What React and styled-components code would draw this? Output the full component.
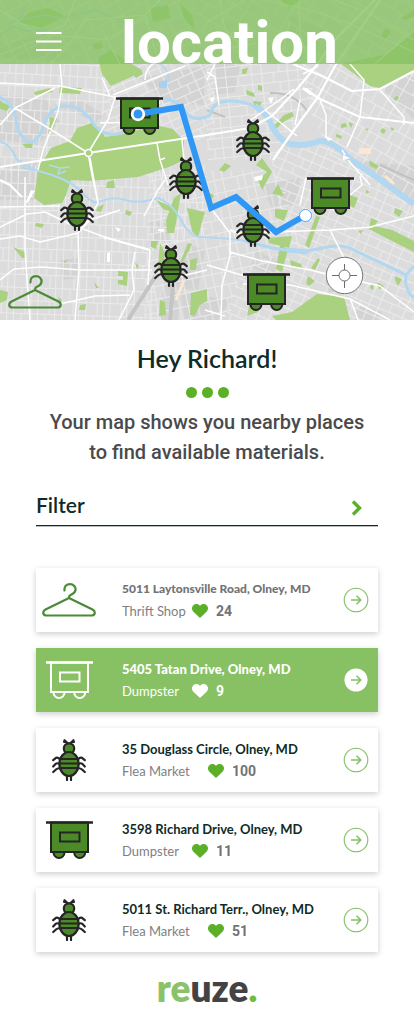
import React from "react";
import styled, { createGlobalStyle, css } from "styled-components";

const GlobalStyle = createGlobalStyle`
  *, *::before, *::after { box-sizing: border-box; }
  body { margin: 0; background: #fff; }
  button { font: inherit; color: inherit; background: none; border: 0; padding: 0; cursor: pointer; }
  h1, h2, h3, p, ul { margin: 0; padding: 0; }
  ul { list-style: none; }
`;

const brandFont = css`font-family: Lato, "Liberation Sans", sans-serif;`;
const bodyFont = css`font-family: Roboto, "Liberation Sans", sans-serif;`;

const Page = styled.div`
  ${brandFont}
  color: #0f2b27;
  background: #fff;
`;

const Hero = styled.section`
  display: grid;
  grid-template-rows: 64px auto;
`;

const Header = styled.header`
  grid-area: 1 / 1;
  z-index: 1;
  display: grid;
  grid-template-columns: 36px 26px 1fr;
  align-items: start;
  background: rgba(135, 193, 98, 0.78);
`;

const MenuButton = styled.button`
  grid-column: 2;
  display: block;
  margin-top: 31px;
  svg { display: block; }
`;

const Title = styled.h1`
  ${bodyFont}
  margin-top: 8px;
  padding-left: 59px;
  font-size: 60px;
  font-weight: 700;
  line-height: 70px;
  color: #fff;
`;

const MapArt = styled.svg`
  grid-area: 1 / 1 / 3 / 2;
  display: block;
  width: 100%;
  height: 320px;
`;

const Content = styled.main`
  padding: 0 36px;
`;

const Greeting = styled.h2`
  padding-top: 22px;
  font-size: 25px;
  line-height: 32px;
  font-weight: 600;
  text-align: center;
`;

const Dots = styled.div`
  display: flex;
  justify-content: center;
  gap: 5px;
  margin-top: 13px;
`;

const Dot = styled.span`
  width: 11px;
  height: 11px;
  border-radius: 50%;
  background: #5cb028;
`;

const Intro = styled.p`
  ${bodyFont}
  max-width: 330px;
  margin: 9px auto 0;
  font-size: 20px;
  line-height: 30px;
  font-weight: 500;
  color: #4a4a4c;
  text-align: center;
`;

const FilterButton = styled.button`
  display: flex;
  align-items: center;
  justify-content: space-between;
  width: 100%;
  height: 42px;
  margin-top: 17px;
  padding-right: 14px;
  border-bottom: 1px solid #0f2b27;
  box-shadow: 0 1px 0 #b9c2c1;
  && { font-size: 21px; font-weight: 600; color: #0f2b27; }
  svg { display: block; margin-top: 6px; }
`;

const PlaceList = styled.ul`
  display: grid;
  gap: 16px;
  padding-top: 42px;
`;

const themes = {
  muted: { bg: "#fff", title: "#737375", sub: "#808083", accent: "#5cb028", size: 12, weight: 900 },
  normal: { bg: "#fff", title: "#0f2b27", sub: "#808083", accent: "#5cb028", size: 13, weight: 700 },
  active: { bg: "#88c163", title: "#fff", sub: "#fff", accent: "#fff", size: 13, weight: 900 },
};

const Card = styled.li`
  display: grid;
  grid-template-columns: 66px minmax(0, 1fr) 26px;
  column-gap: 20px;
  align-items: center;
  height: 64px;
  padding-right: 9px;
  background: ${(p) => themes[p.$tone].bg};
  box-shadow: 0 2px 6px rgba(0, 0, 0, 0.2);
`;

const IconCell = styled.div`
  display: flex;
  justify-content: center;
  svg { display: block; }
`;

const Address = styled.h3`
  font-size: ${(p) => themes[p.$tone].size}px;
  line-height: 20px;
  font-weight: ${(p) => themes[p.$tone].weight};
  white-space: nowrap;
  color: ${(p) => themes[p.$tone].title};
`;

const Meta = styled.div`
  display: flex;
  align-items: center;
  margin-top: 2px;
  line-height: 20px;
  color: ${(p) => themes[p.$tone].sub};
  svg { display: block; color: ${(p) => themes[p.$tone].accent}; }
`;

const Kind = styled.span`
  width: ${(p) => (p.$wide ? 86 : 70)}px;
  font-size: 13px;
`;

const Likes = styled.span`
  ${bodyFont}
  padding-left: 8px;
  font-size: 14px;
  font-weight: 700;
  color: ${(p) => (p.$tone === "active" ? "#fff" : "#737375")};
`;

const GoButton = styled.button`
  display: block;
  svg { display: block; }
`;

const Footer = styled.footer`
  padding: 16px 0 8px;
  text-align: center;
  font-size: 37px;
  line-height: 40px;
  font-weight: 800;
  color: #434345;
`;

const Leaf = styled.span`
  color: ${(p) => (p.$bright ? "#6dbd45" : "#8ac269")};
`;

function Bug() {
  return (
    <g fill="none" stroke="#252525" strokeWidth="2.2" strokeLinecap="round" strokeLinejoin="round">
      <path d="M12.5 1.2 16.5 5M21.5 1.2 17.5 5M12 2.8h1.5M22 2.8h-1.500" />
      <path d="M8 20.500Q6 18 4 18.800L1.200 21.200M7.500 25Q5 23.500 3.500 25L1.200 27.500M8.500 29.500Q6 28.700 4 30.500L1.200 33" />
      <path d="M26 20.500Q28 18 30 18.800L32.800 21.200M26.500 25Q29 23.500 30.500 25L32.800 27.500M25.500 29.500Q28 28.700 30 30.500L32.800 33" />
      <path d="M15 36v5M19 36v5" />
      <circle cx="17" cy="9.500" r="5.200" fill="#4b8a27" />
      <ellipse cx="17" cy="25" rx="9.600" ry="12" fill="#4b8a27" />
      <path d="M8.500 20h17M7.500 24.500h19M8.500 29h17" strokeWidth="1.800" />
    </g>
  );
}

function Dumpster({ outline }) {
  const fill = outline ? "none" : "#4b8a27";
  const stroke = outline ? "#fff" : "#252525";
  return (
    <g fill={fill} stroke={stroke} strokeWidth="2">
      <path d="M7.500 31.500a5.500 5.500 0 0 0 11 0M28.200 31.500a5.500 5.500 0 0 0 11 0" />
      <path d="M5 1.500h37v29.500H5z" />
      <path d="M0 1.500h47" strokeWidth="2.600" />
      <path d="M14 11.500h19.500v9H14z" />
    </g>
  );
}

function Hanger() {
  return (
    <path
      d="M22.500 7.500C22 3.500 24.500 1.200 28 1.200C31.500 1.200 34 4 33.500 7C33 10 31 11 29 11.700C27.300 12.300 27 13 27 15L3.500 26.500C0 28.500 .800 32.500 4.500 32.500H49.500C53.200 32.500 54 28.500 50.500 26.500L27 15"
      fill="none"
      stroke="#4b8a35"
      strokeWidth="2.2"
      strokeLinecap="round"
      strokeLinejoin="round"
    />
  );
}

function PlaceIcon({ kind, outline }) {
  if (kind === "Thrift Shop")
    return <svg width="54" height="34" viewBox="0 0 54 34" aria-hidden="true"><Hanger /></svg>;
  if (kind === "Dumpster")
    return <svg width="47" height="38" viewBox="0 0 47 38" aria-hidden="true"><Dumpster outline={outline} /></svg>;
  return <svg width="34" height="42" viewBox="0 0 34 42" aria-hidden="true"><Bug /></svg>;
}

function Heart() {
  return (
    <svg width="16" height="14" viewBox="0 0 16 14" aria-hidden="true">
      <path fill="currentColor" d="M8 14 1.400 7.700C-.5 5.800-.4 2.700 1.300 1.200 3.300-.6 6.500-.3 8 2 9.500-.3 12.700-.6 14.700 1.200c1.700 1.500 1.800 4.600-.1 6.500z" />
    </svg>
  );
}

function GoIcon({ filled }) {
  return (
    <svg width="26" height="26" viewBox="0 0 26 26" aria-hidden="true" fill="none" stroke="#82c060">
      <circle cx="13" cy="13" r={filled ? 11 : 11.8} fill="#fff" stroke={filled ? "#fff" : "#82c060"} strokeWidth="1.100" />
      <path d="M8 13h9.500M13.500 8.700 17.800 13l-4.300 4.300" strokeWidth="1.500" />
    </svg>
  );
}

const STREET_ZONES = [
  { id: "s1", angle: 3, w: 9, h: 12, area: "M0 60H115L110 98 88 153 0 175z" },
  { id: "s2", angle: -24, w: 13, h: 9, area: "M100 60H215V140H105z" },
  { id: "s3", angle: -6, w: 12, h: 10, area: "M207 60H300L318 100 270 160H207z" },
  { id: "s4", angle: 29, w: 11, h: 13, area: "M300 60H414V215L330 155 310 110z" },
  { id: "s5", angle: 2, w: 8, h: 13, area: "M0 165 207 165 207 235 150 252 160 320H0z" },
  { id: "s6", angle: -12, w: 10, h: 13, area: "M150 170H280L300 250 240 275 230 320H145z" },
  { id: "s7", angle: 23, w: 12, h: 9, area: "M270 150 330 145 414 205V320H225L240 270 285 250z" },
  { id: "s8", angle: -28, w: 17, h: 14, area: "M0 0H195V64H0z" },
  { id: "s9", angle: 31, w: 18, h: 13, area: "M195 0H414V64H195z" },
];

const BLOCKS =
  "M0 95 45 98 60 122 38 145 0 140zM140 78 205 66 204 105 165 103zM0 165 40 162 34 200 0 200zM52 105 80 100 105 115 95 123 75 112zM375 68 395 64 414 78V120L400 105 384 90zM345 160 414 166V200zM215 62 240 66 235 92 215 95zM260 185 300 178 296 205 272 208zM150 220 168 224 170 243 152 239zM187 244 205 250 198 290 172 288zM165 270 182 270 178 320 160 320zM256 250 280 262 275 275 250 268zM60 260 78 258 77 278 62 280zM180 292 230 300 218 320 185 320zM325 280 350 283 352 292 328 292zM360 305 382 312 378 320H352zM0 45 60 30 62 60 0 58zM290 15 325 30 318 50 285 40z";

const PARKS =
  "M45 158 51 148 70 141 77 128 92 123 99 127 105 137 124 134 155 125 173 129 184 141 184 160 169 167 138 177 89 181 71 180 66 195 62 203 44 205 34 198 37 178 39 165zM98 58 110 50 128 62 142 70 131 77 111 86 102 74zM60 87 82 88 80 94 59 93zM34 92 50 88 53 92 35 95zM130 71 141 69 143 74 136 78zM50 117 57 119 54 126 48 135 50 124zM0 101 10 106 7 111 0 109zM22 144 33 143 32 148 26 148zM280 0H300L290 8zM30 12 48 8 65 16 42 28 18 22zM150 8 168 5 170 18 153 22zM180 3 192 15 195 30 184 18zM92 45 101 41 103 48 95 50zM341 64 387 54 414 32V72L398 79 380 88 370 86 356 75zM381 36 386 28 391 31 386 39zM401 18 414 10V16L406 20zM272 128 284 115 292 112 294 116 282 123 277 128zM246 90 254 93 255 97 247 95zM258 85 262 86 262 91 258 90zM242 69 248 68 246 74 242 74zM253 101 262 102 260 106 254 105zM341 124 346 123 347 127 341 128zM348 122 353 124 351 128zM336 134 342 136 341 139 336 137zM382 128 386 130 384 134 380 132zM390 127 395 129 392 131zM396 96 399 97 397 101 393 99zM365 128 369 129 367 131zM107 182 114 180 115 188 106 188zM98 207 104 204 101 212 96 211zM126 210 132 212 130 216 125 214zM36 223 44 224 42 228 35 226zM13 247 25 252 26 258 22 258zM156 200 170 206 172 212 163 209zM174 198 181 193 178 212 174 233 167 233 166 220zM187 208 205 212 202 222 198 238 192 231zM160 243 165 253 162 276 158 268zM151 241 158 241 156 249 151 247zM188 243 192 244 184 260 180 263zM190 260 197 258 196 270 190 270zM118 271 128 272 127 286 118 284V280H123V276H118zM63 261 68 260 65 263zM80 305 86 304 85 310 79 310zM94 282 99 288 96 288zM58 297 62 300 60 304zM191 293 207 289V301L200 305 195 316 190 315zM160 300 165 302 166 315 159 316zM225 163 231 166 224 172 219 170zM262 158 272 172 262 190 258 180 267 172 256 165zM278 184 284 196 272 194zM275 209 288 210 284 221 275 217zM268 238 292 236 289 248 269 243zM280 245 288 249 282 272 276 269zM316 216 320 217 309 248 305 245zM318 258 320 260 315 270 311 268zM290 260 301 264 303 269 291 266zM308 276 315 281 309 286 306 283zM350 195 358 198 354 208 349 205zM371 218 378 221 374 226 392 230 414 241V252L390 240 369 229zM395 208 403 211 399 217 394 213zM371 284 374 285 373 290 370 288zM377 282 384 286 379 290zM395 276 402 279 398 286 395 280zM317 294 344 297 350 320H276L272 316 292 312zM0 290 8 292 7 300 0 303zM250 301 262 300 258 312 247 316zM363 230 361 234 358 231zM366 190 370 192 366 194zM369 160 379 166 376 169 370 166zM135 262 139 266 137 269zM207 192 214 195 211 201 207 199z";

const RIVERS = [
  ["M0 97Q14 104 16 120T28 142Q38 144 45 122Q52 105 68 106T95 126Q108 139 124 132", 3],
  ["M163 98Q178 100 188 115Q197 122 210 115Q212 102 228 101T258 108", 3],
  ["M255 106Q266 112 271 124Q278 140 290 144Q305 147 319 141Q332 140 350 159L372 174 414 204", 6],
  ["M0 141Q10 145 14 154T22 161M22 163Q30 169 42 172Q66 178 80 190Q90 202 97 203Q110 196 125 200T158 198Q172 203 181 220T200 237Q228 238 245 241", 2],
  ["M245 241 272 248 300 252 318 249Q340 243 352 249L406 275 414 266M406 275Q404 290 414 298", 3],
  ["M287 250 308 252", 5],
  ["M160 64Q171 72 168 82M22 167 30 170 36 170M49 165 60 168 58 174 66 171M60 168 70 167M150 0 165 10", 1.5],
  ["M0 35 12 26 25 31 48 30M5 25 18 20 25 8M20 20 45 15 60 18 95 10 130 25", 2],
];

const ROADS =
  "M0 83 60 86 115 97 160 103M0 125 15 108 55 88M60 64 62 86 58 112 43 150 38 170M115 97 108 120 88 153 92 175 98 203M113 95 150 80 185 66M15 108 55 132 88 153M102 78 110 96M145 80Q145 66 160 60M100 123 145 122M157 143 160 160 168 185M160 160 165 158M182 140 184 160M207 80 215 64M207 72 215 77 219 105M0 227 27 214 45 212 70 224 107 238 150 250M0 239 20 236 40 242 78 233 90 220 120 210M0 280 14 269 42 267 80 270 152 270M0 207 60 206M25 177 25 250 30 320M90 158 98 203 88 220 78 233 79 270 75 320M144 216 158 190 165 180M135 252 132 270 134 290 119 320M150 250 148 285M60 304 95 296 130 295M300 100 295 125M248 122 281 99 294 89M265 110 297 136M303 74 318 66M318 95 326 115 326 138M347 147 360 117 364 80 350 64M380 90 404 117M345 155 342 150M404 117V125M207 265 245 276M213 211 230 233 230 256 222 285 221 320M230 252 262 261 310 270 380 286 414 312M330 230 346 262M300 205 306 178M310 190 340 215M370 227 414 216M240 233 330 230 373 227M165 280 207 270M243 284 290 285 350 299 390 320M350 298 358 320M205 310 225 316M360 176 362 185 350 195M348 160 370 185";

const AVENUES =
  "M0 167 88 153 207 135 250 128 272 116 298 88 316 66 335 40 375 0M273 160 294 130 318 97 335 66 380 0M293 64 322 76 352 91 380 89 414 71M303 88 320 99 360 117 414 123M107 238 150 250M230 230 240 234M0 180 10 185 22 197";

const HEADER_ROADS =
  "M0 10 40 35 65 25 75 0M0 55 50 35 110 40 145 15 160 0M50 64 65 50 85 20 145 15M105 35 120 64M145 15 158 60M220 0 225 30 260 64M207 22 245 0M299 0 300 35 310 64M264 0 310 10 345 22 414 52M335 0 372 15 414 40M375 64 414 30M207 52 300 35M280 64 290 20";

function CityMap() {
  return (
    <MapArt viewBox="0 0 414 320" preserveAspectRatio="xMidYMid slice" role="img" aria-label="Map of nearby places">
      <defs>
        {STREET_ZONES.map((z) => (
          <pattern key={z.id} id={z.id} width={z.w * 3} height={z.h * 2} patternUnits="userSpaceOnUse" patternTransform={`rotate(${z.angle})`}>
            <path
              d={`M0 .500H${z.w * 3}M0 ${z.h + 0.5}H${z.w * 3}M.500 0V${z.h * 2}M${z.w} 0V${z.h}M${z.w * 1.5} ${z.h}V${z.h * 2}M${z.w * 2.2} 0V${z.h * 2}`}
              fill="none"
              stroke="#ebebeb"
              strokeWidth="1"
            />
          </pattern>
        ))}
      </defs>
      <rect width="414" height="320" fill="#dcdcdc" />
      <path d={BLOCKS} fill="#d3d3d3" />
      {STREET_ZONES.map((z) => <path key={z.id} d={z.area} fill={`url(#${z.id})`} />)}
      <path d={PARKS} fill="#a9d180" />
      <path d="M159 82 167 80V88H159z" fill="#a9cfec" />
      <path d="M184 280 176 300M385 176 394 184" stroke="#fbe8d2" strokeWidth="3" />
      <path d="M359 148h12v6h-12z" fill="#fbe8d2" />
      <path d="M155 277 128 320M173 285 170 320" stroke="#c4c4c4" strokeWidth="4" />
      <path d="M207 110 225 117M270 93Q295 92 308 112M380 165 414 180" fill="none" stroke="#c2c2c2" strokeWidth="2" />
      {RIVERS.map(([d, width]) => <path key={d} d={d} fill="none" stroke="#b1d7f1" strokeWidth={width} strokeLinejoin="round" />)}
      <path d={HEADER_ROADS} fill="none" stroke="#fff" strokeWidth="1.200" opacity=".7" />
      <path d={ROADS} fill="none" stroke="#fff" strokeWidth="1.500" strokeLinejoin="round" />
      <path d={AVENUES} fill="none" stroke="#fff" strokeWidth="2.200" strokeLinejoin="round" />
      <path d="M31 190 35 191 28 202 25 204zM268 98 274 97 271 104zM325 136 333 139 328 141zM343 155 350 158 343 160zM103 236 109 237 105 240zM115 227 121 229 118 232zM158 229 165 229 163 232 158 231zM107 253 110 252V262H107zM254 177 263 175 262 180 255 181zM210 98 214 97 214 101 211 102zM302 89 307 88 314 94 310 95z" fill="#fff" />
      <circle cx="88.500" cy="153" r="3.500" fill="#a9d180" stroke="#fff" strokeWidth="1.500" />

      <g transform="translate(116 97)"><Dumpster /></g>
      <g transform="translate(307 177)"><Dumpster /></g>
      <g transform="translate(243 273)"><Dumpster /></g>
      <g transform="translate(236 119)"><Bug /></g>
      <g transform="translate(169 157)"><Bug /></g>
      <g transform="translate(60 189)"><Bug /></g>
      <g transform="translate(154 245)"><Bug /></g>
      <g transform="translate(236 205)"><Bug /></g>
      <g transform="translate(8 275)"><Hanger /></g>

      <path d="M138 114 181 107 211 208 236 197 276 232 305 215.500" fill="none" stroke="#2f97f6" strokeWidth="6" />
      <circle cx="138" cy="114" r="7.200" fill="#fff" />
      <circle cx="138" cy="114" r="4.500" fill="#2f97f6" />
      <circle cx="305.500" cy="215.500" r="6" fill="#fff" stroke="#2f97f6" strokeWidth=".800" />
      <g fill="#fff" stroke="#6b6b6b">
        <circle cx="344.500" cy="275.500" r="18.200" strokeWidth=".900" />
        <circle cx="344.500" cy="275.500" r="5.500" />
        <path d="M344.500 264v6M344.500 281v7M332 275.500h7M350 275.500h7" />
      </g>
    </MapArt>
  );
}

const PLACES = [
  { address: "5011 Laytonsville Road, Olney, MD", kind: "Thrift Shop", likes: 24, tone: "muted" },
  { address: "5405 Tatan Drive, Olney, MD", kind: "Dumpster", likes: 9, tone: "active" },
  { address: "35 Douglass Circle, Olney, MD", kind: "Flea Market", likes: 100, tone: "normal" },
  { address: "3598 Richard Drive, Olney, MD", kind: "Dumpster", likes: 11, tone: "normal" },
  { address: "5011 St. Richard Terr., Olney, MD", kind: "Flea Market", likes: 51, tone: "normal" },
];

function PlaceCard({ address, kind, likes, tone }) {
  const active = tone === "active";
  return (
    <Card $tone={tone}>
      <IconCell><PlaceIcon kind={kind} outline={active} /></IconCell>
      <div>
        <Address $tone={tone}>{address}</Address>
        <Meta $tone={tone}>
          <Kind $wide={kind === "Flea Market"}>{kind}</Kind>
          <Heart />
          <Likes $tone={tone}>{likes}</Likes>
        </Meta>
      </div>
      <GoButton type="button" aria-label={`Open ${address}`}><GoIcon filled={active} /></GoButton>
    </Card>
  );
}

export default function App() {
  return (
    <Page>
      <GlobalStyle />
      <Hero>
        <Header>
          <MenuButton type="button" aria-label="Menu">
            <svg width="26" height="21" viewBox="0 0 26 21" aria-hidden="true">
              <path d="M0 2h25.500M0 10.500h25.500M0 19h25.500" stroke="#fff" strokeWidth="2" />
            </svg>
          </MenuButton>
          <Title>location</Title>
        </Header>
        <CityMap />
      </Hero>
      <Content>
        <Greeting>Hey Richard!</Greeting>
        <Dots><Dot /><Dot /><Dot /></Dots>
        <Intro>Your map shows you nearby places to find available materials.</Intro>
        <FilterButton type="button">
          Filter
          <svg width="14" height="16" viewBox="0 0 14 16" aria-hidden="true">
            <path d="M3 1.500 9.500 8 3 14.500" fill="none" stroke="#5cb028" strokeWidth="3.400" />
          </svg>
        </FilterButton>
        <PlaceList>
          {PLACES.map((place) => <PlaceCard key={place.address} {...place} />)}
        </PlaceList>
      </Content>
      <Footer><Leaf>re</Leaf>uze<Leaf $bright>.</Leaf></Footer>
    </Page>
  );
}
